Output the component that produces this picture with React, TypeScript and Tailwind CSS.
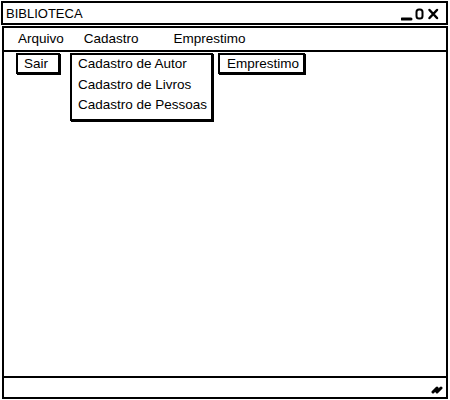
import React from "react";

export default function App() {
  const font = { fontFamily: '"Liberation Sans", Arial, sans-serif' };
  return (
    <div
      className="w-[450px] h-[400px] bg-white text-black text-[13.5px] leading-none relative overflow-hidden"
      style={font}
    >
      <div className="flex flex-col w-[447px] h-[398px] ml-[1px] mt-[1px]">
        {/* Title bar */}
        <div className="h-[24px] border-2 border-black flex items-center justify-between pl-[3px] pr-[5px] shrink-0">
          <span className="text-[13px]">BIBLIOTECA</span>
          <svg width="40" height="14" viewBox="0 0 40 14" className="mt-[1px]">
            <path d="M1 12 L10 12" stroke="#000" strokeWidth="3" strokeLinecap="round" />
            <rect x="15.5" y="2.5" width="6" height="9" rx="2.5" fill="none" stroke="#000" strokeWidth="2" />
            <path d="M28.5 3 L36 11 M36 3 L28.5 11" stroke="#000" strokeWidth="2.5" strokeLinecap="round" />
          </svg>
        </div>
        {/* Menu bar */}
        <div className="h-[26px] border-2 border-black ml-[1px] mt-[1px] flex items-center shrink-0">
          <span className="ml-[14px]">Arquivo</span>
          <span className="ml-[20px]">Cadastro</span>
          <span className="ml-[35px]">Emprestimo</span>
        </div>
        {/* Content */}
        <div className="flex-1 border-x-2 border-black ml-[1px] flex items-start pl-[12px] pt-[1px]">
          <div className="w-[44px] h-[21px] border-2 border-black shadow-[1px_1px_0_#000] flex items-center pl-[6px]">
            Sair
          </div>
          <div className="w-[143px] h-[68px] ml-[10px] border-2 border-black shadow-[1px_1px_0_#000] flex flex-col pt-[2px] pl-[6px] gap-[7px]">
            <span>Cadastro de Autor</span>
            <span>Cadastro de Livros</span>
            <span>Cadastro de Pessoas</span>
          </div>
          <div className="w-[87px] h-[21px] ml-[5px] border-2 border-black shadow-[1px_1px_0_#000] flex items-center pl-[7px]">
            Emprestimo
          </div>
        </div>
        {/* Status bar */}
        <div className="h-[23px] border-2 border-black ml-[1px] flex items-center justify-end pr-[3px] shrink-0">
          <svg width="12" height="12" viewBox="0 0 12 12">
            <path d="M2 10 L6 6 M6 10 L10 6" stroke="#000" strokeWidth="3" strokeLinecap="round" />
          </svg>
        </div>
      </div>
    </div>
  );
}
